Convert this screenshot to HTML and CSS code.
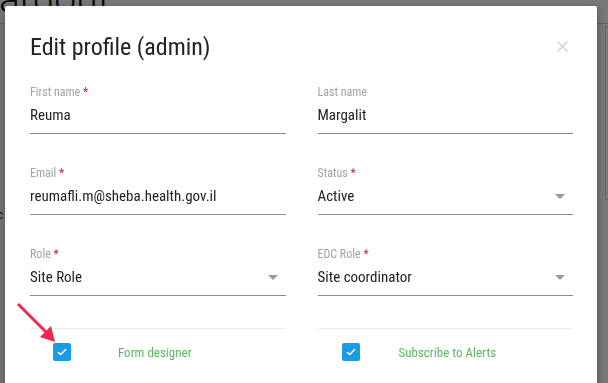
FILE: index.html
```html
<!DOCTYPE html>
<html lang="en">
<head>
    <meta charset="UTF-8">
    <title>Edit profile</title>
    <link rel="stylesheet" href="styles.css">
</head>
<body>
    <div class="page">
        <h1 class="page-title">ardout</h1>
        <hr class="page-rule">
        <div class="page-body">
            <div class="page-text">
                <p>t</p>
                <p>rc</p>
            </div>
            <div class="page-card"></div>
        </div>
    </div>

    <div class="backdrop">
        <div class="modal">
            <div class="modal-header">
                <h2>Edit profile (admin)</h2>
                <span class="close">
                    <svg width="11" height="11" viewBox="0 0 11 11"><path d="M0.5 0.5L10.5 10.5M10.5 0.5L0.5 10.5" stroke="#cfcfcf" stroke-width="1.3" fill="none"/></svg>
                </span>
            </div>

            <div class="form-grid">
                <div class="field">
                    <label>First name <span class="req">*</span></label>
                    <div class="value">Reuma</div>
                </div>
                <div class="field">
                    <label>Last name</label>
                    <div class="value">Margalit</div>
                </div>
                <div class="field">
                    <label>Email <span class="req">*</span></label>
                    <div class="value">reumafli.m@sheba.health.gov.il</div>
                </div>
                <div class="field">
                    <label>Status <span class="req">*</span></label>
                    <div class="value select">Active <span class="caret"></span></div>
                </div>
                <div class="field">
                    <label>Role <span class="req">*</span></label>
                    <div class="value select">Site Role <span class="caret"></span></div>
                </div>
                <div class="field">
                    <label>EDC Role <span class="req">*</span></label>
                    <div class="value select">Site coordinator <span class="caret"></span></div>
                </div>
                <div class="check-row first">
                    <span class="checkbox">
                        <svg width="10" height="8" viewBox="0 0 10 8"><path d="M1 4.2L3.7 6.6L9 1.2" stroke="#fff" stroke-width="1.4" fill="none"/></svg>
                    </span>
                    <span class="check-label">Form designer</span>
                </div>
                <div class="check-row second">
                    <span class="checkbox">
                        <svg width="10" height="8" viewBox="0 0 10 8"><path d="M1 4.2L3.7 6.6L9 1.2" stroke="#fff" stroke-width="1.4" fill="none"/></svg>
                    </span>
                    <span class="check-label">Subscribe to Alerts</span>
                </div>
            </div>
        </div>
    </div>

    <svg class="arrow" width="44" height="44" viewBox="0 0 44 44">
        <path d="M2 2L30 30" stroke="#ea2a50" stroke-width="3" fill="none"/>
        <path d="M39 40L24 35L35 24Z" fill="#ea2a50"/>
    </svg>
</body>
</html>
```

FILE: styles.css
```css
body {
    margin: 0;
    padding: 0;
    width: 608px;
    height: 383px;
    overflow: hidden;
    background-color: #fff;
    font-family: Roboto, "Noto Sans", sans-serif;
}
.page {
    height: 383px;
}
.page-title {
    margin: -23px 0 0 -1px;
    font-size: 39px;
    font-weight: 300;
    line-height: 45px;
    color: #111;
}
.page-rule {
    margin: 1px 0 0;
    border: none;
    border-top: 1px solid #ccc;
}
.page-body {
    display: flex;
    justify-content: space-between;
}
.page-text {
    margin-left: -8px;
    padding-top: 150px;
    font-size: 13px;
    color: #222;
}
.page-text p {
    margin: 0 0 17px;
    line-height: 16px;
}
.page-card {
    width: 10px;
    height: 172px;
    margin-top: 2px;
    border: 1px solid #ddd;
    border-right: none;
    margin-right: -8px;
}
.backdrop {
    position: fixed;
    left: 0;
    top: 0;
    right: 0;
    bottom: 0;
    background-color: rgba(0, 0, 0, 0.53);
}
.modal {
    margin: 6px 11px 0 5px;
    height: 400px;
    padding: 27px 24px 0 25px;
    background-color: #fff;
    border-radius: 2px;
    box-shadow: 0 3px 10px rgba(0, 0, 0, 0.35);
    font-stretch: 75%;
}
.modal-header {
    display: flex;
    justify-content: space-between;
    align-items: flex-start;
}
.modal-header h2 {
    margin: 0;
    font-size: 24px;
    font-weight: 400;
    line-height: 28px;
    color: #222;
}
.close {
    display: block;
    margin: 8px 5px 0 0;
    line-height: 0;
}
.form-grid {
    display: grid;
    grid-template-columns: 1fr 1fr;
    column-gap: 32px;
    row-gap: 31px;
    margin-top: 23px;
}
.field label {
    display: block;
    font-size: 12px;
    line-height: 16px;
    color: #a3a3a3;
}
.req {
    color: #c3264d;
}
.value {
    position: relative;
    padding: 3px 0 6px;
    font-size: 15px;
    line-height: 24px;
    color: #222;
    border-bottom: 1px solid #8a8a8a;
}
.caret {
    position: absolute;
    right: 8px;
    top: 13px;
    width: 0;
    height: 0;
    border-left: 5px solid transparent;
    border-right: 5px solid transparent;
    border-top: 5px solid #9a9a9a;
}
.check-row {
    display: flex;
    align-items: center;
    margin-top: 1px;
    padding-top: 14px;
    border-top: 1px solid #ebebeb;
}
.checkbox {
    display: flex;
    justify-content: center;
    align-items: center;
    width: 18px;
    height: 18px;
    border-radius: 2px;
    background-color: #1a9be2;
}
.check-label {
    font-size: 13px;
    color: #5cb660;
}
.check-row.first {
    padding-left: 23px;
}
.check-row.first .checkbox {
    margin-right: 47px;
}
.check-row.second {
    padding-left: 24px;
}
.check-row.second .checkbox {
    margin-right: 39px;
}
.arrow {
    position: absolute;
    left: 16px;
    top: 302px;
}
```
